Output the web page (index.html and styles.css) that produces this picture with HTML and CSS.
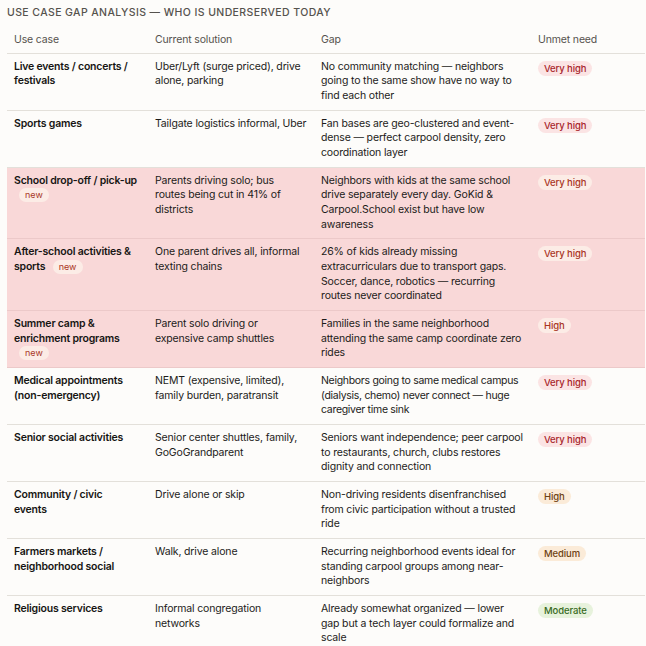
FILE: index.html
```html
<!DOCTYPE html>
<html lang="en">
<head>
<meta charset="utf-8">
<title>Use case gap analysis</title>
<link rel="stylesheet" href="styles.css">
</head>
<body>
<div class="page">
  <h2 class="title">Use case gap analysis — who is underserved today</h2>
  <table class="gap-table">
    <colgroup>
      <col class="c-use">
      <col class="c-sol">
      <col class="c-gap">
      <col class="c-need">
    </colgroup>
    <thead>
      <tr>
        <th>Use case</th>
        <th>Current solution</th>
        <th>Gap</th>
        <th>Unmet need</th>
      </tr>
    </thead>
    <tbody>
      <tr>
        <td class="use">Live events / concerts / festivals</td>
        <td>Uber/Lyft (surge priced), drive alone, parking</td>
        <td>No community matching — neighbors going to the same show have no way to find each other</td>
        <td><span class="pill vhigh">Very high</span></td>
      </tr>
      <tr>
        <td class="use">Sports games</td>
        <td>Tailgate logistics informal, Uber</td>
        <td>Fan bases are geo-clustered and event-dense — perfect carpool density, zero coordination layer</td>
        <td><span class="pill vhigh">Very high</span></td>
      </tr>
      <tr class="hl">
        <td class="use">School drop-off / pick-up <span class="tag">new</span></td>
        <td>Parents driving solo; bus routes being cut in 41% of districts</td>
        <td>Neighbors with kids at the same school drive separately every day. GoKid &amp; Carpool.School exist but have low awareness</td>
        <td><span class="pill hl-pill">Very high</span></td>
      </tr>
      <tr class="hl">
        <td class="use">After-school activities &amp; sports <span class="tag">new</span></td>
        <td>One parent drives all, informal texting chains</td>
        <td>26% of kids already missing extracurriculars due to transport gaps. Soccer, dance, robotics — recurring routes never coordinated</td>
        <td><span class="pill hl-pill">Very high</span></td>
      </tr>
      <tr class="hl">
        <td class="use">Summer camp &amp; enrichment programs <span class="tag">new</span></td>
        <td>Parent solo driving or expensive camp shuttles</td>
        <td>Families in the same neighborhood attending the same camp coordinate zero rides</td>
        <td><span class="pill hl-pill">High</span></td>
      </tr>
      <tr>
        <td class="use">Medical appointments (non-emergency)</td>
        <td>NEMT (expensive, limited), family burden, paratransit</td>
        <td class="tight">Neighbors going to same medical campus (dialysis, chemo) never connect — huge caregiver time sink</td>
        <td><span class="pill vhigh">Very high</span></td>
      </tr>
      <tr>
        <td class="use">Senior social activities</td>
        <td>Senior center shuttles, family, GoGoGrandparent</td>
        <td>Seniors want independence; peer carpool to restaurants, church, clubs restores dignity and connection</td>
        <td><span class="pill vhigh">Very high</span></td>
      </tr>
      <tr>
        <td class="use">Community / civic<br>events</td>
        <td>Drive alone or skip</td>
        <td>Non-driving residents disenfranchised from civic participation without a trusted ride</td>
        <td><span class="pill high">High</span></td>
      </tr>
      <tr>
        <td class="use">Farmers markets / neighborhood social</td>
        <td>Walk, drive alone</td>
        <td>Recurring neighborhood events ideal for standing carpool groups among near-neighbors</td>
        <td><span class="pill medium">Medium</span></td>
      </tr>
      <tr>
        <td class="use">Religious services</td>
        <td>Informal congregation networks</td>
        <td>Already somewhat organized — lower gap but a tech layer could formalize and scale</td>
        <td><span class="pill moderate">Moderate</span></td>
      </tr>
    </tbody>
  </table>
</div>
</body>
</html>
```

FILE: styles.css
```css
html, body {
  margin: 0;
  padding: 0;
  background: #fdfcfa;
}

body {
  font-family: "Inter", "Liberation Sans", sans-serif;
  color: #1c1b19;
  font-size: 10.5px;
}

.page {
  padding: 6px 0 0 7px;
  width: 639px;
}

.title {
  margin: 0 0 6px 0;
  font-size: 10.5px;
  line-height: 14px;
  font-weight: 500;
  letter-spacing: 0.4px;
  text-transform: uppercase;
  color: #55524d;
}

.gap-table {
  width: 638px;
  border-collapse: collapse;
  table-layout: fixed;
  letter-spacing: -0.15px;
}

.c-use { width: 141px; }
.c-sol { width: 166px; }
.c-gap { width: 217px; }
.c-need { width: 114px; }

.gap-table th {
  text-align: left;
  font-weight: 400;
  color: #55524d;
  padding: 7px 7px 5px;
  line-height: 14.5px;
  border-bottom: 1px solid #e3e0da;
}

.gap-table td {
  vertical-align: top;
  padding: 6px 7px 5.9px;
  line-height: 14.7px;
  border-bottom: 1px solid #e3e0da;
}

.gap-table td.tight {
  letter-spacing: -0.3px;
}

.gap-table tbody tr:last-child td {
  border-bottom: none;
}

.gap-table td.use {
  font-weight: 600;
  color: #161513;
  padding-right: 3px;
  letter-spacing: -0.2px;
}

.gap-table tr.hl td {
  background: #f9d8d8;
  border-bottom-color: #ecc9c9;
}

.pill {
  display: inline-block;
  font-size: 9.5px;
  line-height: 15px;
  padding: 0 6px;
  border-radius: 8px;
  font-weight: 500;
  margin-top: 1px;
  letter-spacing: -0.1px;
}

.vhigh {
  background: #fbe4e4;
  color: #a8262b;
}

.hl-pill {
  background: #fcece6;
  color: #a9361f;
}

.high {
  background: #fbebd8;
  color: #6e4212;
}

.medium {
  background: #fbebd8;
  color: #6e4212;
}

.moderate {
  background: #e7f2dc;
  color: #376a1d;
}

.tag {
  display: inline-block;
  font-size: 9px;
  line-height: 14px;
  padding: 0 6px;
  margin-left: 5px;
  border-radius: 8px;
  font-weight: 400;
  letter-spacing: 0;
  vertical-align: top;
  background: #fcece6;
  color: #a9361f;
}
```
